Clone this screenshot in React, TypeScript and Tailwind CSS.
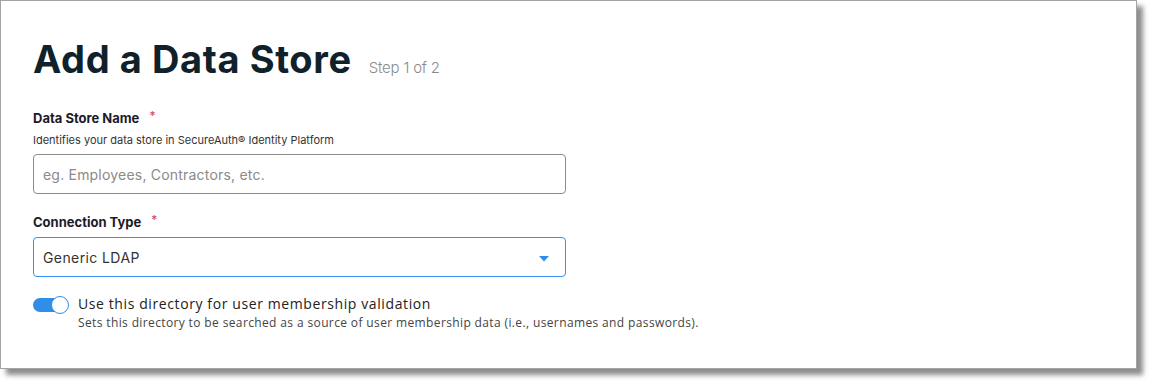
import React, { useState } from 'react';

const heading = { fontFamily: 'Inter, "Liberation Sans", sans-serif' };

export default function App() {
    const [enabled, setEnabled] = useState(true);
    const [name, setName] = useState('');

    return (
        <div className="w-[1152px] h-[384px] bg-white" style={heading}>
            <div className="w-[1137px] h-[369px] bg-white border border-[#a3a3a3] shadow-[6px_6px_5px_rgba(0,0,0,0.45)] pl-[32px] pt-[36px]">
                {/* title */}
                <div className="flex items-baseline gap-[17px]">
                    <h1 className="text-[38px] leading-[44px] font-bold text-[#0f212b] tracking-[0.6px]">Add a Data Store</h1>
                    <span className="text-[15px] text-[#8a8a8a] font-light tracking-[-0.2px]">Step 1 of 2</span>
                </div>

                {/* data store name */}
                <div className="mt-[29px] flex items-start gap-[10px]">
                    <span className="text-[13px] leading-[16px] font-bold text-[#1b1b2a]">Data Store Name</span>
                    <span className="text-[12px] leading-[12px] text-[#d0405a]">*</span>
                </div>
                <div className="mt-[7px] text-[11px] leading-[15px] text-[#333]">Identifies your data store in SecureAuth® Identity Platform</div>
                <input
                    value={name}
                    onChange={(e) => setName(e.target.value)}
                    placeholder="eg. Employees, Contractors, etc."
                    className="mt-[6px] block w-[533px] h-[40px] border border-[#8c8c8c] rounded-[4px] px-[9px] text-[14px] tracking-[0.2px] text-[#333] placeholder:text-[#8a8a8a] outline-none"
                />

                {/* connection type */}
                <div className="mt-[20px] flex items-start gap-[10px]">
                    <span className="text-[13px] leading-[16px] font-bold text-[#1b1b2a]">Connection Type</span>
                    <span className="text-[12px] leading-[12px] text-[#d0405a]">*</span>
                </div>
                <div className="mt-[7px] w-[533px] h-[40px] border border-[#3592f2] rounded-[4px] pl-[9px] pr-[16px] flex items-center justify-between">
                    <span className="text-[14px] tracking-[0.4px] text-[#333]">Generic LDAP</span>
                    <svg width="10" height="6" viewBox="0 0 10 6" className="mt-[4px]">
                        <path d="M0 0 L10 0 L5 5.5 Z" fill="#2f8ee8" />
                    </svg>
                </div>

                {/* toggle */}
                <div className="mt-[18px] flex items-start gap-[9px]" style={{ fontFamily: '"Open Sans", sans-serif' }}>
                    <button
                        onClick={() => setEnabled(!enabled)}
                        className="relative w-[36px] h-[18px] shrink-0 mt-[1px]"
                        aria-label="toggle"
                    >
                        <span className={`absolute left-0 top-[2px] w-[30px] h-[14px] rounded-full ${enabled ? 'bg-[#2f8ee8]' : 'bg-[#bbb]'}`} />
                        <span className={`absolute top-0 w-[18px] h-[18px] rounded-full bg-white border-[1.5px] border-[#2f8ee8] ${enabled ? 'left-[18px]' : 'left-0'}`} />
                    </button>
                    <div>
                        <div className="text-[14px] leading-[18px] tracking-[0.6px] text-[#222]">Use this directory for user membership validation</div>
                        <div className="mt-[3px] text-[12px] leading-[14px] tracking-[0.37px] text-[#444]">Sets this directory to be searched as a source of user membership data (i.e., usernames and passwords).</div>
                    </div>
                </div>
            </div>
        </div>
    );
}
